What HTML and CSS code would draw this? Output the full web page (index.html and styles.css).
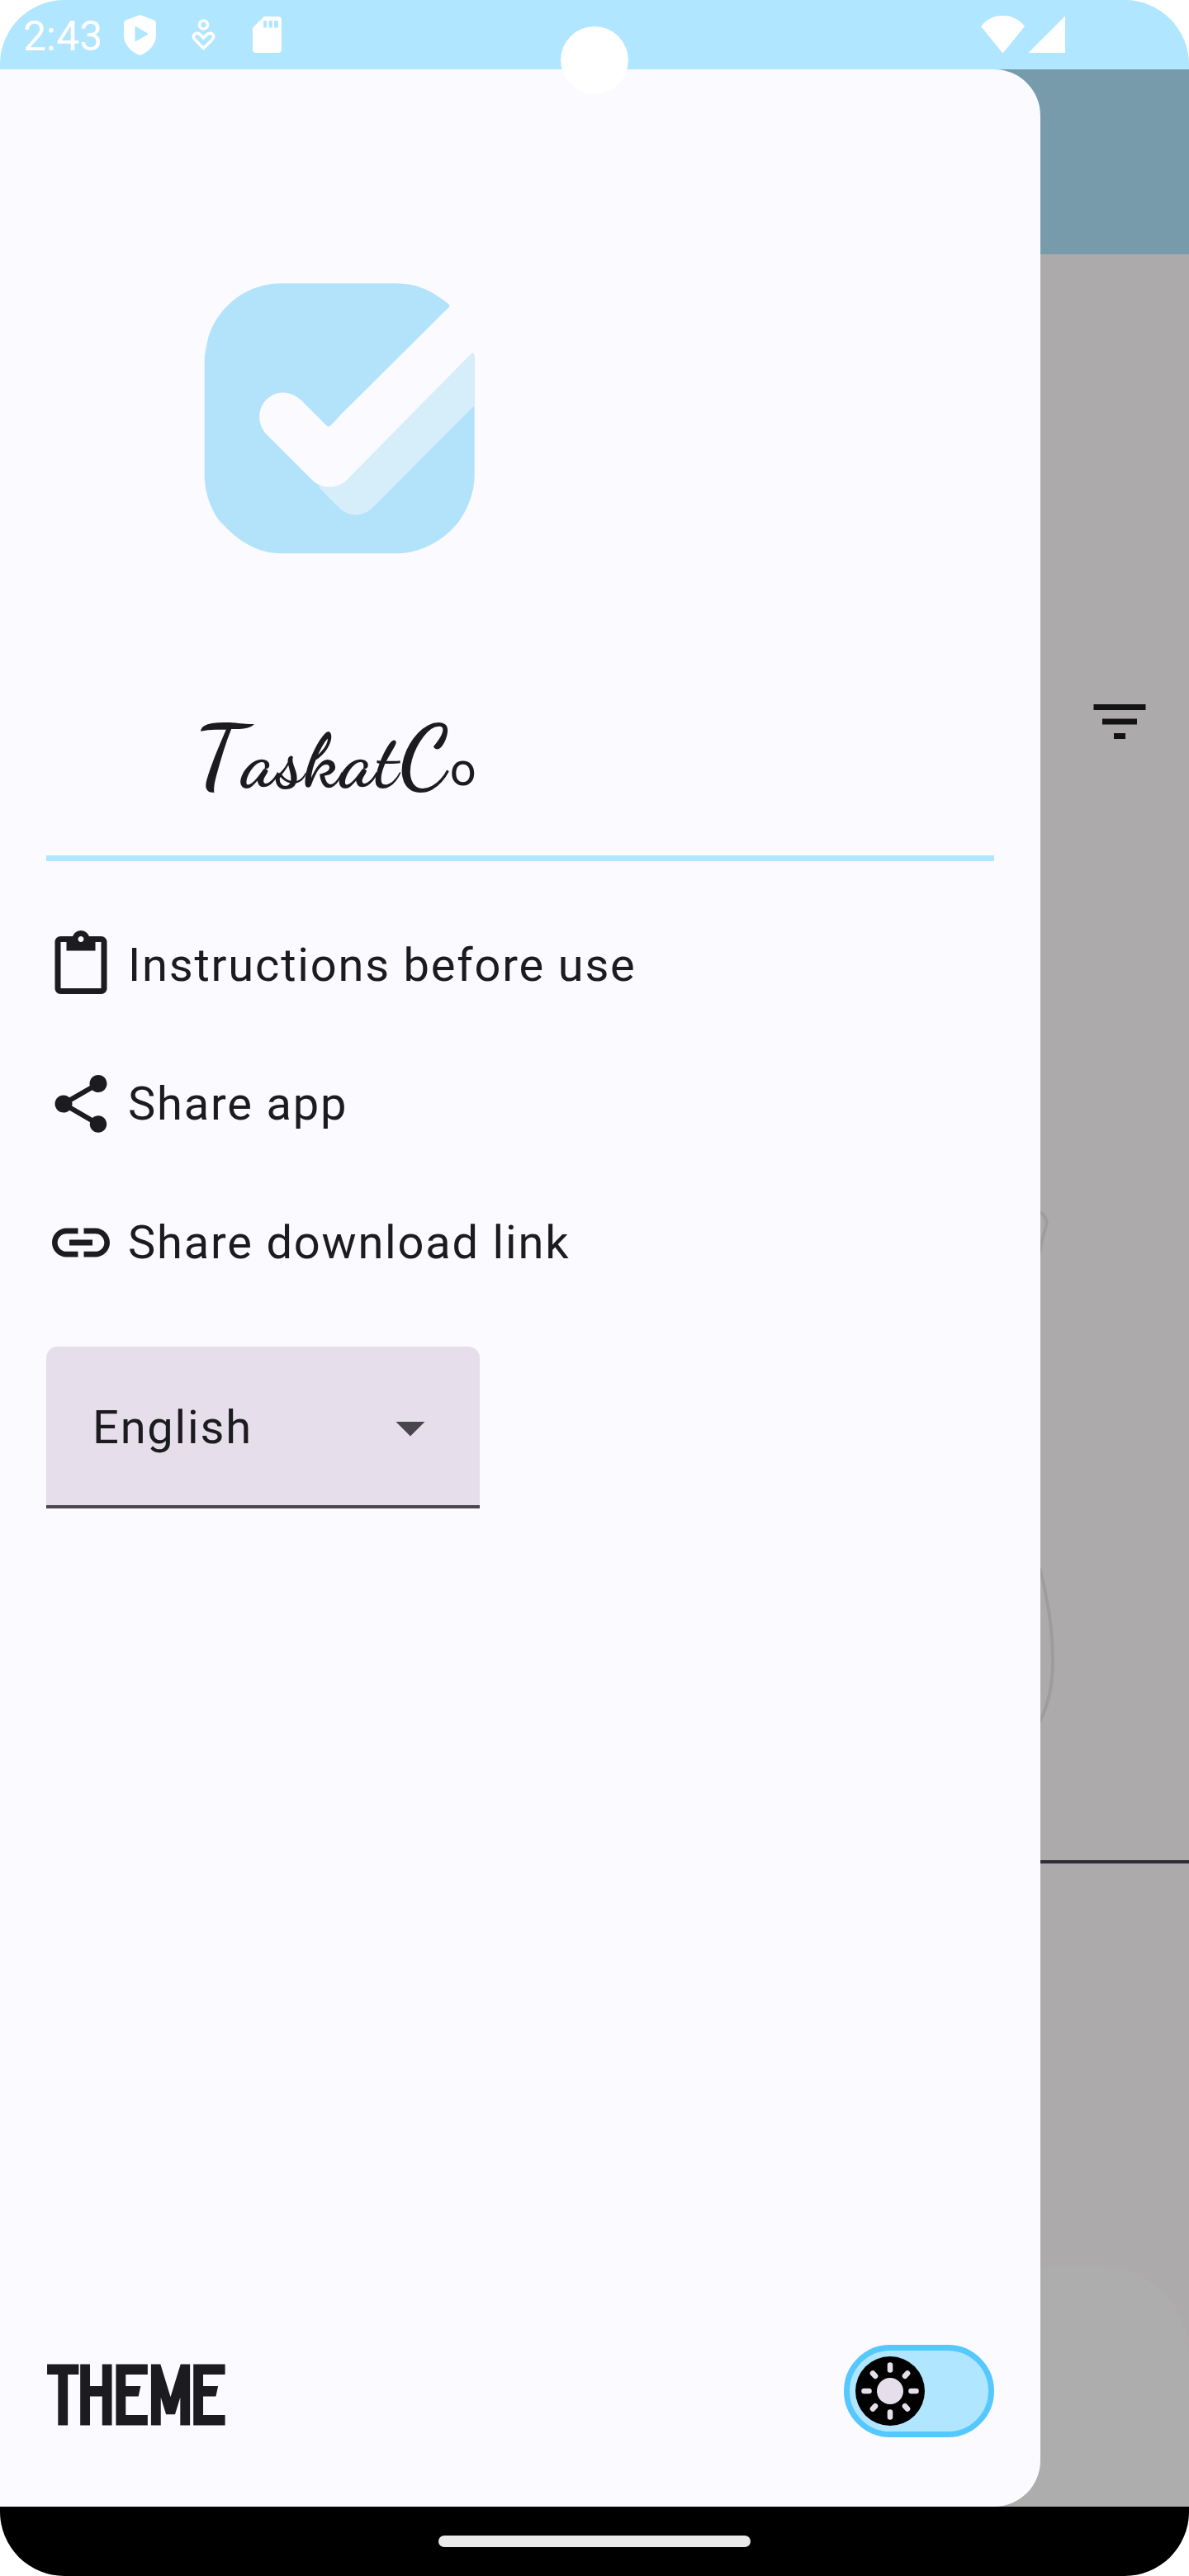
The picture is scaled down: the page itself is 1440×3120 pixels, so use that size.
FILE: index.html
```html
<!DOCTYPE html>
<html lang="en">
<head>
<meta charset="utf-8">
<title>TaskatCo</title>
<link rel="stylesheet" href="styles.css">
</head>
<body>
<div class="screen">
  <header class="status-bar">
    <span class="clock">2:43</span>
    <svg class="status-icons" width="200" height="84" viewBox="0 0 200 84" fill="#fff">
      <path fill-rule="evenodd" d="M29.500 18L47 24.500Q49 25.500 49 28V43C49 54 40 63.500 29.500 67C19 63.500 10 54 10 43V28Q10 25.500 12 24.500ZM23.500 33V49Q23.500 50.500 25 49.800L38.500 42Q39.500 41 38.500 40.200L25 32.200Q23.500 31.500 23.500 33Z"/>
      <g fill="none" stroke="#fff" stroke-width="3.600"><circle cx="106.500" cy="30" r="5"/><path d="M106.500 58.500L97 49C91 43 97 38 102 41.500L106.500 46L111 41.500C116 38 122 43 116 49Z"/></g>
      <path fill-rule="evenodd" d="M180 20H197Q201 20 201 24V60Q201 64 197 64H170Q166 64 166 60V33.500ZM179 25V33.500H183V25ZM185.500 25V33.500H190V25ZM192 25V33.500H197V25Z"/>
    </svg>
    <svg class="network" width="104" height="84" viewBox="0 0 104 84" fill="#fff">
      <path d="M0 32Q10 19 26.500 19Q43 19 53 32L26.500 64.500ZM57.500 64H102V19.500Z"/>
    </svg>
    <span class="camera"></span>
  </header>

  <main class="stage">
    <section class="page-behind">
      <div class="app-bar"></div>
      <div class="filter-row">
        <svg width="84" height="84" viewBox="0 0 24 24" fill="#131314"><path d="M10 18h4v-2h-4v2zM3 6v2h18V6H3zM6 13h12v-2H6v2z"/></svg>
      </div>
      <svg class="sketch" width="180" height="660" viewBox="0 1450 180 660" fill="none" stroke="#9c9d9c" stroke-width="3.800">
        <path d="M-2 1467C5 1471 9 1478 7 1485C5 1491 2 1501 -1 1518M-1 1899C8 1932 15 1972 15 2012C15 2042 10 2066 -2 2087"/>
      </svg>
      <div class="rule"></div>
      <div class="bottom-panel"></div>
    </section>

    <aside class="drawer">
      <div class="brand">
        <svg class="logo" width="380" height="380" viewBox="0 0 1140 1140">
          <path fill="#b2e3fb" d="M360 70H780C850 72 900 88 970 145Q976 151 970 158Q945 180 925 202L575 550Q545 585 537 589Q531 591 525 585L435 495C365 430 275 485 283 565Q285 590 305 615L470 780C515 825 570 820 605 780L1052 326Q1060 315 1064 338V770C1063 830 1040 890 1005 938C950 1005 870 1050 780 1051H360C275 1050 205 1005 150 945C120 920 84 845 83 770V335C90 300 92 285 98 262C135 150 240 70 360 70Z"/>
          <path fill="#d5eef9" d="M700 683L1052 326Q1059 316 1064 338V517L1058 519L705 874C660 925 610 918 575 888L500 812V804C540 815 575 810 605 780Z"/>
          <path fill="none" stroke="#dff1fa" stroke-width="3" d="M698 684C705 710 725 728 740 748C765 768 782 782 769 803"/>
        </svg>
        <h1 class="wordmark"><span class="cap">T</span><span class="script">askat</span><span class="cap">C</span><span>o</span></h1>
      </div>
      <hr class="divider">
      <nav class="menu">
        <a class="item">
          <svg width="84" height="84" viewBox="0 0 24 24"><path d="M19,2h-4.180C14.400,0.840 13.300,0 12,0c-1.300,0 -2.400,0.840 -2.820,2L5,2c-1.100,0 -2,0.900 -2,2v16c0,1.100 0.900,2 2,2h14c1.100,0 2,-0.900 2,-2L21,4c0,-1.100 -0.900,-2 -2,-2zM12,2c0.550,0 1,0.450 1,1s-0.450,1 -1,1 -1,-0.450 -1,-1 0.450,-1 1,-1zM19,20L5,20L5,4h2v3h10L17,4h2v16z"/></svg>
          <span>Instructions before use</span>
        </a>
        <a class="item">
          <svg width="84" height="84" viewBox="0 0 24 24"><path d="M18,16.080c-0.760,0 -1.440,0.300 -1.960,0.770L8.910,12.700c0.050,-0.230 0.090,-0.460 0.090,-0.700s-0.040,-0.470 -0.090,-0.700l7.050,-4.110c0.540,0.500 1.250,0.810 2.040,0.810 1.660,0 3,-1.340 3,-3s-1.340,-3 -3,-3 -3,1.340 -3,3c0,0.240 0.040,0.470 0.090,0.700L8.040,9.810C7.500,9.310 6.790,9 6,9c-1.660,0 -3,1.340 -3,3s1.340,3 3,3c0.790,0 1.500,-0.310 2.040,-0.810l7.120,4.160c-0.050,0.210 -0.080,0.430 -0.080,0.650 0,1.610 1.310,2.920 2.920,2.920s2.920,-1.310 2.920,-2.920 -1.310,-2.920 -2.920,-2.920z"/></svg>
          <span>Share app</span>
        </a>
        <a class="item">
          <svg width="84" height="84" viewBox="0 0 24 24"><path d="M3.900,12c0,-1.710 1.390,-3.100 3.100,-3.100h4L11,7L7,7c-2.760,0 -5,2.240 -5,5s2.240,5 5,5h4v-1.900L7,15.100c-1.710,0 -3.100,-1.390 -3.100,-3.100zM8,13h8v-2L8,11v2zM17,7h-4v1.900h4c1.710,0 3.100,1.390 3.100,3.100s-1.390,3.100 -3.100,3.100h-4L13,17h4c2.760,0 5,-2.240 5,-5s-2.240,-5 -5,-5z"/></svg>
          <span>Share download link</span>
        </a>
      </nav>
      <div class="select">
        <span>English</span>
        <svg width="84" height="84" viewBox="0 0 24 24" fill="#49454f"><path d="M7 10l5 5 5-5z"/></svg>
      </div>
      <div class="theme-row">
        <span class="theme-label">THEME</span>
        <div class="switch">
          <svg width="84" height="84" viewBox="-42 -42 84 84">
            <circle r="42"/>
            <circle r="16" fill="#e6deea"/>
            <g stroke="#e6deea" stroke-width="6.600" stroke-linecap="round">
              <path d="M0-31.500V-25.500M0 31.500V25.500M-31.500 0H-25.500M31.500 0H25.500M-21-21.500L-18-18.200M21-21.500L18-18.200M-21 21.500L-18 18.200M21 21.500L18 18.200"/>
            </g>
          </svg>
        </div>
      </div>
    </aside>
  </main>

  <footer class="nav-bar"><span class="handle"></span></footer>
</div>
</body>
</html>
```
FILE: styles.css
```css
* { box-sizing: border-box; }
body { margin: 0; background: #fff; font-family: Roboto, sans-serif; color: #1c1b1f; }
svg { display: block; flex: none; }
.screen { width: 1440px; height: 3120px; display: flex; flex-direction: column; border-radius: 78px; overflow: hidden; }

.status-bar { position: relative; height: 84px; flex: none; display: flex; align-items: center; background: #b0e6ff; padding: 0 148px 0 28px; z-index: 1; }
.clock { width: 112px; font-size: 50px; line-height: 84px; color: #fff; padding-top: 3px; }
.status-icons { overflow: visible; }
.network { margin-left: auto; }
.camera { position: absolute; left: 679px; top: 32px; width: 82px; height: 82px; border-radius: 50%; background: #fff; }

.stage { display: grid; grid-template: 2952px / 1440px; }
.page-behind, .drawer { grid-area: 1 / 1; }
.page-behind { display: flex; flex-direction: column; align-items: flex-end; background: #acaaab; }
.app-bar { width: 100%; height: 224px; background: #779bab; }
.filter-row { height: 84px; margin-top: 524px; padding-right: 42px; }
.sketch { margin-top: 534px; }
.rule { width: 100%; height: 4px; margin-top: 142.500px; background: #302d38; }
.bottom-panel { width: 100%; flex: 1; margin-top: 489px; background: #adadad; border-radius: 0 105px 0 0; }

.drawer { width: 1260px; display: flex; flex-direction: column; background: #fbfaff; border-radius: 0 56px 56px 0; padding: 0 56px 84px; }
.brand { height: 952px; padding: 236px 0 0 164px; }
.wordmark { display: flex; align-items: baseline; margin: 142px 0 0 15px; height: 150px; line-height: 150px; font-size: 56px; font-weight: 400; letter-spacing: 1.750px; white-space: nowrap; }
.cap, .script { font-family: "Dancing Script", cursive; font-weight: 700; }
.cap { font-size: 105px; }
.script { font-size: 91px; }
.divider { width: 100%; height: 7px; margin: 0; border: 0; background: #b0e6ff; }
.menu { padding-top: 84px; display: flex; flex-direction: column; gap: 84px; }
.item { display: flex; align-items: center; gap: 15px; height: 84px; fill: #1c1b1f; }
.item, .select { font-size: 56px; letter-spacing: 1.800px; line-height: 84px; }
.select { width: 525px; height: 196px; margin-top: 84px; padding: 3px 42px 0 56px; display: flex; align-items: center; justify-content: space-between; background: #e6deea; border-bottom: 4px solid #4b4651; border-radius: 14px 14px 0 0; }
.theme-row { margin-top: auto; height: 112px; display: flex; align-items: center; justify-content: space-between; }
.theme-label { margin: 18px 0 0 -3px; font-family: "Odibee Sans", "Bebas Neue", sans-serif; font-size: 102px; font-weight: 700; line-height: 112px; transform: scaleX(.935); transform-origin: left; }
.switch { width: 182px; height: 112px; padding: 7px; border: 7px solid #54c8ff; border-radius: 56px; background: #b0e6ff; }

.nav-bar { height: 84px; flex: none; display: flex; justify-content: center; align-items: center; background: #000; }
.handle { width: 378px; height: 14px; border-radius: 7px; background: #eaeaea; }
```
